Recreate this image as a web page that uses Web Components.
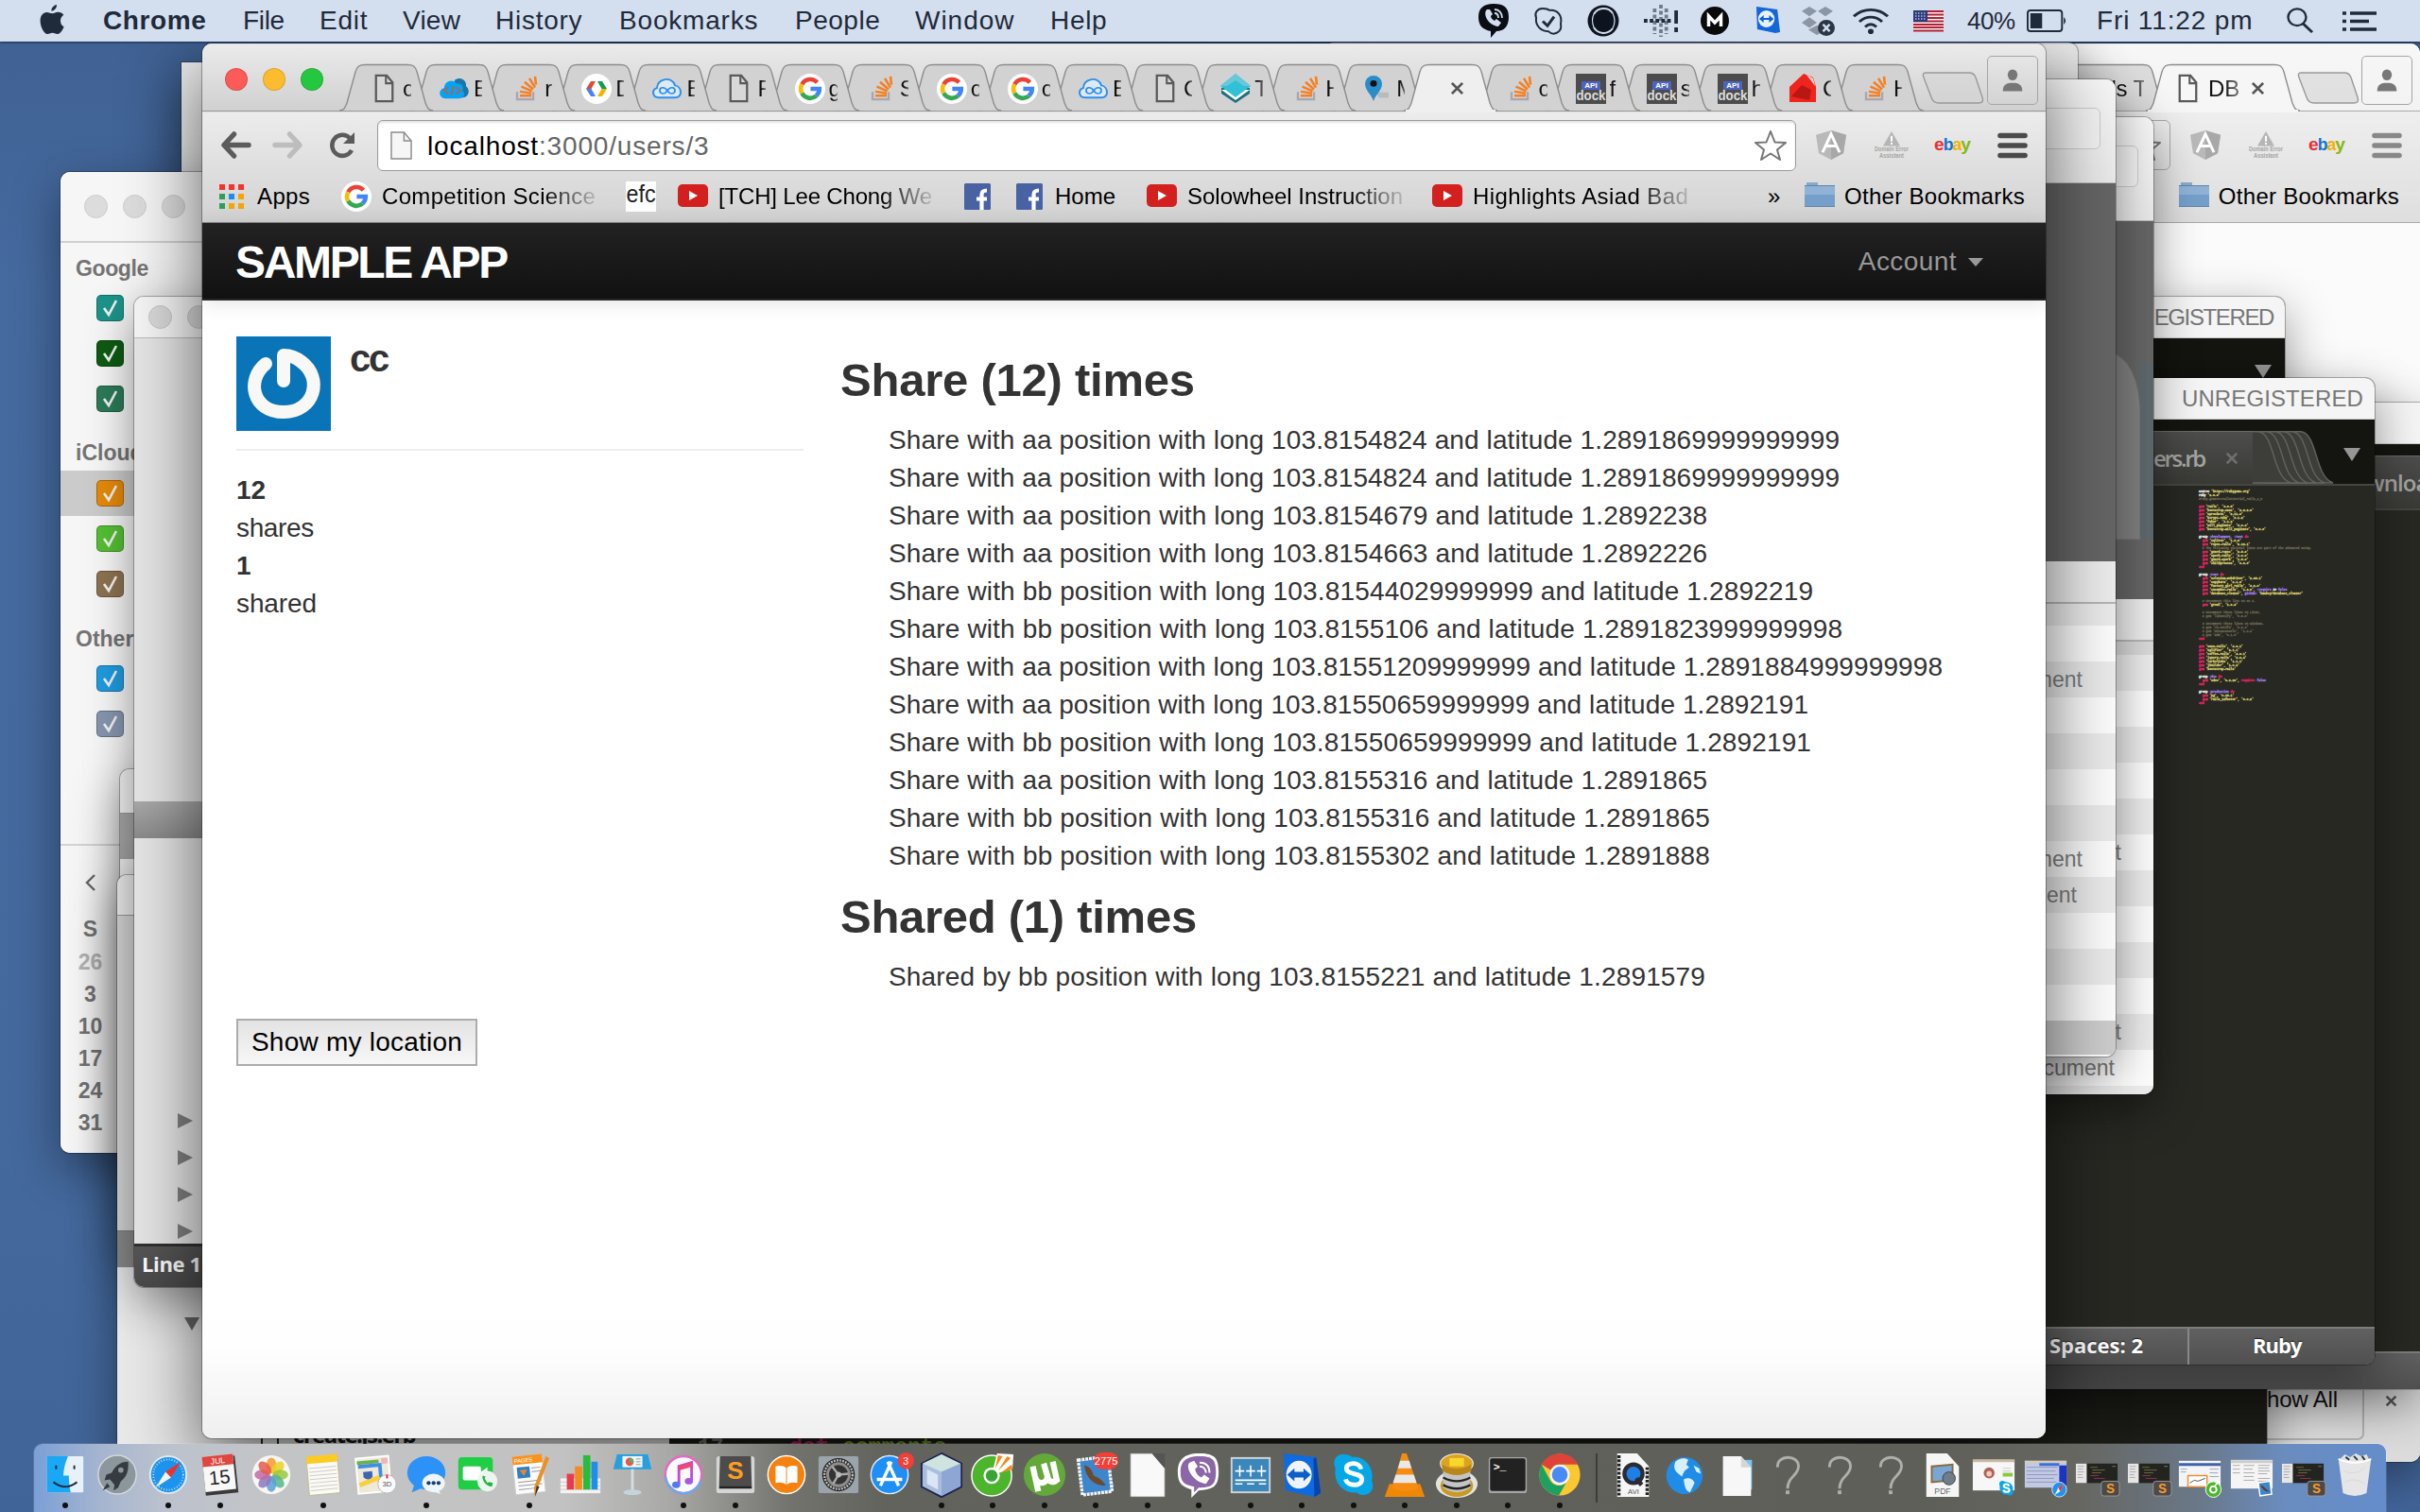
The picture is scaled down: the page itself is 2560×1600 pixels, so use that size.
<!DOCTYPE html>
<html lang="en">
<head>
<meta charset="utf-8">
<title>Sample App</title>
<style>
html,body{margin:0;width:2560px;height:1600px;overflow:hidden;background:#44679b;font-family:"Liberation Sans",Arial,sans-serif}
</style>
</head>
<body>
<desk-top></desk-top>
<script>
const PAGE='<path d="M2 1h13l7 8v22H2z" fill="#fff" fill-opacity=".15" stroke="#5a5a5a" stroke-width="2.6"/><path d="M14 1v9h8" fill="none" stroke="#5a5a5a" stroke-width="2.4"/>';
const GOOG='<circle cx="16" cy="16" r="16" fill="#fff"/><g fill="none" stroke-width="4.6"><path d="M23.5 9.2A10 10 0 0 0 7.3 11.3" stroke="#ea4335"/><path d="M7.3 11.3A10 10 0 0 0 7.3 20.7" stroke="#fbbc05"/><path d="M7.3 20.7A10 10 0 0 0 22.4 23.5" stroke="#34a853"/><path d="M22.4 23.5A10 10 0 0 0 25.8 16H16.4" stroke="#4285f4"/></g>';
const S_BADGE='<rect x="0" y="0" width="20" height="16" rx="3" fill="#4a4a4a" stroke="#999"/><text x="10" y="13" text-anchor="middle" font-size="14" font-weight="bold" fill="#ff9a1f">S</text>';
const thumbDark='<rect x="2" y="12" width="46" height="21" fill="#23241f"/><rect x="2" y="12" width="12" height="21" fill="#e6e6e6"/><path d="M4 15h7M4 18h6M4 21h7M4 24h5M4 27h6" stroke="#aaa"/><path d="M18 16h8M20 19h14M20 22h10" stroke="#6c6c45"/><path d="M18 25h9M22 28h12" stroke="#8a3355"/><path d="M42 15h4" stroke="#777"/>';
const ICONS={
apple:['0 0 26 32','<path d="M18 0c.3 3-2.300 6.600-5.600 6.600C12 3.600 15 .6 18 0zM22 17c0-3 1.500-5 3.400-6.200C24 8.800 21.600 7.800 19.500 7.800c-2.700 0-4 1.400-6 1.400S9.800 7.900 7.500 7.900C3.600 7.900.6 11.500.6 17c0 6.500 4.200 14 7.500 14 2 0 3-1.300 5.500-1.300 2.400 0 3.200 1.300 5.300 1.300 3 0 5.600-4.500 6.700-7.700C23.400 22.300 22 20 22 17z" fill="#1f2a3a"/>'],
mviber:['0 0 34 36','<path d="M17 0c11 0 16 4 16 14s-5 15-13 15l-6 7v-7C5 27 1 23 1 14S6 0 17 0z" fill="#0a0d14"/><path d="M10 6c-5 4 1 17 12 18l3-4-5-4-2 2c-2-1-4-3-4-5l2-2-3-5z" fill="#d3dfef"/><path d="M18 6c5 0 8 4 8 9M18 10c3 0 4 2 4 5" fill="none" stroke="#d3dfef" stroke-width="1.800"/>'],
mskype:['0 0 32 32','<path d="M10 2C4 2 1 7 3 12c-1 9 5 15 13 15 6 6 15 0 13-8C31 9 25 3 17 4c-2-2-5-2-7-2z" fill="none" stroke="#1f2a3a" stroke-width="2"/><path d="M10 16l5 5 7-10" fill="none" stroke="#1f2a3a" stroke-width="3"/>'],
mcirc:['0 0 34 34','<circle cx="17" cy="17" r="16.500" fill="#0d1420"/><path d="M27 9A12 12 0 0 0 7 10M7 24A12 12 0 0 0 27 25" fill="none" stroke="#d3dfef" stroke-width="2"/><path d="M7 10q-3 6 0 14M27 9q4 8 0 16" fill="none" stroke="#d3dfef" stroke-width="1.200"/>'],
mdots:['0 0 38 34','<g stroke="#1f2a3a" stroke-width="4" stroke-dasharray="4 2.500"><path d="M12 4v27M19 0v34M25 4v27" opacity=".55"/><path d="M0 17h30"/></g><path d="M36 6v14M36 24v5" stroke="#1f2a3a" stroke-width="4"/>'],
mm:['0 0 30 30','<circle cx="15" cy="15" r="15" fill="#0a0a0a"/><path d="M8.500 21V10l6.500 7 6.500-7v11" fill="none" stroke="#fff" stroke-width="3.500"/>'],
mtv:['0 0 28 30','<path d="M1 1l23 3 3 24-5 1L2 25z" fill="#1566d8"/><circle cx="12" cy="14" r="9" fill="#e8f0fa"/><path d="M4 14l5-4v3h6v-3l5 4-5 4v-3H9v3z" fill="#0c5fd6"/>'],
mdrop:['0 0 36 34','<g fill="#8b95a3"><path d="M9 1l8 5-8 6-8-6zM26 1l8 5-8 6-8-6zM9 13l8 6-8 6-8-6zM8 27l9-5 9 6-9 5z"/></g><circle cx="27" cy="25" r="9" fill="#2b3544"/><path d="M23.500 21l7 8M30.500 21l-7 8" stroke="#d3dfef" stroke-width="2.500"/>'],
mwifi:['0 0 40 30','<g fill="none" stroke="#1f2a3a" stroke-width="3"><path d="M2 10c10-10 26-10 36 0M8 16c7-7 17-7 24 0M14 22c4-4 8-4 12 0"/></g><circle cx="20" cy="27" r="3" fill="#1f2a3a"/>'],
mflag:['0 0 32 22','<rect width="32" height="22" fill="#f4f4f4"/><path d="M0 1h32M0 4.500h32M0 8h32M0 11.500h32M0 15h32M0 18h32M0 21.500h32" stroke="#b22234" stroke-width="1.800"/><rect width="15" height="12" fill="#2b3a78"/><path d="M2 3h11M2 6h11M2 9h11" stroke="#fff" stroke-dasharray="1.500 1.500"/>'],
mbatt:['0 0 46 24','<rect x="1" y="1" width="38" height="22" rx="3" fill="none" stroke="#1f2a3a" stroke-width="2"/><rect x="4" y="4" width="13" height="16" fill="#1f2a3a"/><path d="M41 8q4 4 0 8z" fill="#1f2a3a"/>'],
msearch:['0 0 30 30','<circle cx="12" cy="11" r="9.500" fill="none" stroke="#1f2a3a" stroke-width="2.400"/><path d="M18 18l10 10" stroke="#1f2a3a" stroke-width="3"/>'],
mlist:['0 0 36 22','<path d="M0 2h4M0 11h4M0 20h4M8 2h28M8 11h20M8 20h28" stroke="#1f2a3a" stroke-width="3.600"/>'],
page:['0 0 24 32',PAGE],
goog:['0 0 32 32',GOOG],
cloudcode:['0 0 32 26','<path d="M16 3c6-5 13 0 12 7 5 4 3 13-4 13H12z" fill="#1a76a8"/><path d="M6 24c-7 0-8-10-1-12C5 4 14 1 18 7c6-1 8 5 6 8 4 3 2 9-3 9z" fill="#03a3f7"/><path d="M9 11l-4 4 4 4M18 11l4 4-4 4M15 10l-3 10" stroke="#d9541e" stroke-width="1.600" fill="none"/>'],
so:['0 0 24 28','<path d="M3 18v8h17v-8" fill="none" stroke="#a6a8ad" stroke-width="2.400"/><g stroke="#f48024" stroke-width="2.600"><path d="M6 22h12M6 17.500l12 2M7.500 12l11 5M11 7l9 8M16 3l6 10M22 1l1 9"/></g>'],
gdev:['0 0 32 32','<circle cx="16" cy="16" r="16" fill="#fff"/><path d="M10 8h5l-4.500 8H5z" fill="#dd4b39"/><path d="M5 16h5.500l4.500 8h-5z" fill="#4285f4"/><path d="M17 8h5l5 8h-5.500z" fill="#0f9d58"/><path d="M21.500 16H27l-5 8h-5z" fill="#f4b400"/>'],
cloudinf:['0 0 32 26','<path d="M7 23c-7 0-8-9-2-11C5 1 21-2 24 9c7 1 9 14 0 14z" fill="#dceafb" stroke="#2f8fe8" stroke-width="2"/><path d="M16 15c-3-5-8-4-8 0s5 5 8 0 8-4 8 0-5 5-8 0" fill="none" stroke="#2f8fe8" stroke-width="1.800"/>'],
layers:['0 0 32 32','<path d="M16 31L1 21v-6h30v6z" fill="#1d6f80"/><path d="M16 28L1 17h30z" fill="#fff"/><path d="M16 25L0 13 16 0l16 13z" fill="#32c0d6"/><path d="M16 0l16 13h-7L16 7l-9 6H0z" fill="#67c8d8"/>'],
pin:['0 0 28 32','<path d="M12 20h14v6H16z" fill="#bbb"/><path d="M10 30C8 22 1 18 1 10a9 9 0 0 1 18 0c0 8-7 12-9 20z" fill="#2a8dcb"/><circle cx="10" cy="10" r="3.500" fill="#111"/>'],
apidock:['0 0 32 32','<rect width="32" height="32" fill="#4c4c4c"/><rect x="6" y="8" width="20" height="9" fill="#4c63c0"/><text x="16" y="15" font-size="8" text-anchor="middle" fill="#fff" font-weight="bold">API</text><text x=".5" y="28" font-size="15" fill="#ddd" font-weight="bold" textLength="31" lengthAdjust="spacingAndGlyphs">dock</text>'],
ruby:['0 0 32 32','<path d="M16 0l10 4 3 10v16H1V14z" fill="#ef241c"/><path d="M3 24l11-12 10 5-2 11z" fill="#b81712"/><path d="M19 1l7 4 2 8z" fill="#ffd9d5"/>'],
close:['0 0 16 16','<path d="M2 2l12 12M14 2L2 14" stroke="#555" stroke-width="3"/>'],
user:['0 0 28 32','<ellipse cx="14" cy="8" rx="6" ry="7.500" fill="#777"/><path d="M2 30c0-9 5-11 12-11s12 2 12 11z" fill="#777"/>'],
back:['0 0 32 28','<path d="M14 2L3 14l11 12M4 14h26" fill="none" stroke="#5b5b5b" stroke-width="5.500" stroke-linecap="round" stroke-linejoin="round"/>'],
fwd:['0 0 32 28','<path d="M18 2l11 12-11 12M28 14H2" fill="none" stroke="#bdbdbd" stroke-width="5.500" stroke-linecap="round" stroke-linejoin="round"/>'],
reload:['0 0 28 28','<path d="M22 6A11 11 0 1 0 24 19" fill="none" stroke="#5b5b5b" stroke-width="4.500"/><path d="M27 0v12H15z" fill="#5b5b5b"/>'],
blank:['0 0 24 30','<path d="M1 1h14l8 9v19H1z" fill="#f6f6f6" stroke="#8b8b8b" stroke-width="1.500"/><path d="M15 1v9h8" fill="none" stroke="#8b8b8b" stroke-width="1.500"/>'],
star:['0 0 36 34','<path d="M18 2l4.500 11.500L34 14l-9 7.500L28 32l-10-6.500L8 32l3-10.500L2 14l11.500-.5z" fill="#fff" stroke="#767676" stroke-width="2" stroke-linejoin="round"/>'],
ang:['0 0 33 32','<path d="M16 0l16 5-3 20-13 7L3 25 0 5z" fill="#b9b9b9"/><path d="M16 0l16 5-3 20-13 7z" fill="#a8a8a8"/><path d="M7 24l9-20 9 20M11 17h11" fill="none" stroke="#fff" stroke-width="3"/>'],
dom:['0 0 36 32','<path d="M18 1l9 16H9z" fill="#b5b5b5"/><path d="M18 6v6M18 13.500v2" stroke="#fff" stroke-width="2"/><text x="0" y="23" font-size="7" fill="#a5a5a5" textLength="36" lengthAdjust="spacingAndGlyphs" font-weight="bold">Domain Error</text><text x="5" y="30" font-size="7" fill="#a5a5a5" textLength="26" lengthAdjust="spacingAndGlyphs" font-weight="bold">Assistant</text>'],
ebay:['0 0 40 24','<g font-size="19" font-weight="bold"><text x="0" y="17" fill="#e53238" textLength="11" lengthAdjust="spacingAndGlyphs">e</text><text x="10" y="17" fill="#0f72d9" textLength="11" lengthAdjust="spacingAndGlyphs">b</text><text x="20" y="17" fill="#f5af02" textLength="10" lengthAdjust="spacingAndGlyphs">a</text><text x="29" y="17" fill="#86b817" textLength="11" lengthAdjust="spacingAndGlyphs">y</text></g>'],
burger:['0 0 32 28','<path d="M3 3.500h26M3 14h26M3 24.500h26" stroke="currentColor" stroke-width="5.600" stroke-linecap="round"/>'],
apps:['0 0 26 26','<path d="M0 3h6M10 3h6M20 3h6" stroke="#f4332b" stroke-width="6"/><path d="M0 13h6" stroke="#2f9e58" stroke-width="6"/><path d="M10 13h6" stroke="#1e8bf2" stroke-width="6"/><path d="M20 13h6" stroke="#f2a503" stroke-width="6"/><path d="M0 23h6" stroke="#2f9e58" stroke-width="6"/><path d="M10 23h6M20 23h6" stroke="#f2a503" stroke-width="6"/>'],
efc:['0 0 32 32','<rect width="32" height="32" fill="#fff"/><text x=".5" y="22" font-size="25" fill="#222" textLength="31" lengthAdjust="spacingAndGlyphs">efc</text>'],
yt:['0 0 32 24','<rect width="32" height="24" rx="5" fill="#d3201f"/><path d="M12 7l9 5-9 5z" fill="#fff"/>'],
fb:['0 0 28 28','<rect width="28" height="28" rx="1.500" fill="#4862a3"/><path d="M18.500 28V12c0-3 1-4.500 5.500-4.500M13 16.500h11" fill="none" stroke="#fff" stroke-width="4.200"/>'],
folder:['0 0 32 28','<path d="M2 1h12v5H2z" fill="#88aaca"/><rect x="0" y="4" width="32" height="23" rx="1" fill="#8fb2d6"/><rect x="0" y="14" width="32" height="13" rx="1" fill="#759fca"/><path d="M0 26.500h32M0 4.500h32" stroke="#5e86ae"/>'],
power:['0 0 100 100','<rect width="100" height="100" fill="#0a74b8"/><path d="M31 29C10 46 17 80 50 80s42-36 19-53C63 22 57 20 50 20v27" fill="none" stroke="#f8f8f6" stroke-width="14" stroke-linecap="round" stroke-linejoin="round"/>'],
finder:['0 0 50 50','<rect x="5" y="4" width="40" height="39" rx="1" fill="#e9f1f8"/><path d="M5 4h23c-3 7-5 14-5 21h6c0 8 1 13 2 18H5z" fill="#19a8f5"/><path d="M12 32q13 10 26 0M15 14v4M35 14v4" fill="none" stroke="#1a2b40" stroke-width="2"/>'],
rocket:['0 0 50 50','<circle cx="25" cy="24" r="21" fill="#8c979d" stroke="#d6dadc" stroke-width="1.500"/><path d="M37 10c-10 0-15 6-18 12l-6 2-2 6 6-1 5 6-1 6 5-3 3-7c6-4 9-11 8-21zM14 33l-5 8 8-4z" fill="#353b40"/><circle cx="29" cy="19" r="3" fill="#8c979d"/>'],
safari:['0 0 50 50','<circle cx="25" cy="24" r="21" fill="#e5e9ec"/><circle cx="25" cy="24" r="19" fill="#1c94ee"/><circle cx="25" cy="24" r="16.500" fill="none" stroke="#bfe0fb" stroke-width="2" stroke-dasharray="1 2"/><path d="M39 10L28 27l-6-6z" fill="#f03027"/><path d="M11 38l11-17 6 6z" fill="#f4f4f4"/>'],
cal:['0 0 50 50','<g transform="rotate(-6 25 25)"><rect x="7" y="5" width="36" height="40" fill="#3a3a3a"/><rect x="7" y="4" width="34" height="37" fill="#f8f8f8"/><rect x="7" y="3" width="34" height="11" fill="#e0453f"/><text x="24" y="12" font-size="9" fill="#fff" text-anchor="middle">JUL</text><text x="24" y="34" font-size="21" fill="#222" text-anchor="middle">15</text></g>'],
photos:['0 0 50 50','<circle cx="25" cy="24" r="21" fill="#f6f6f4"/>'+['#f79a2b','#e8d324','#9ac93c','#54b88a','#5a9fd8','#8f77c0','#c36aa5','#e85b4e'].map((c,i)=>`<ellipse cx="25" cy="14" rx="5.500" ry="8.500" fill="${c}" opacity=".85" transform="rotate(${i*45} 25 24)"/>`).join('')],
notes:['0 0 50 50','<g transform="rotate(-5 25 25)"><rect x="8" y="4" width="34" height="41" fill="#fbfaf3" stroke="#bdb58c" stroke-width=".8"/><rect x="8" y="3" width="34" height="8" fill="#fccb22"/><path d="M10 16h30M10 20h30M10 24h30M10 28h30M10 32h30M10 36h30M10 40h30" stroke="#ccc"/></g>'],
maps:['0 0 50 50','<g transform="rotate(-5 25 25)"><rect x="6" y="5" width="36" height="38" fill="#efe9d8" stroke="#fff" stroke-width="2"/><path d="M7 8h24v4H7z" fill="#69b34c"/><path d="M8 14h24v26" fill="none" stroke="#3f8fe6" stroke-width="4"/><path d="M8 34l20-6 12 12" fill="none" stroke="#f8cf3c" stroke-width="5"/><path d="M13 20h10v6q-5 5-10 0z" fill="#3c66b4"/><path d="M34 7h7v6h-7z" fill="#f3b1b8"/></g><circle cx="39" cy="34" r="10" fill="#fafafa" stroke="#bbb"/><text x="39" y="37" font-size="8" text-anchor="middle" fill="#555">3D</text><path d="M39 24v4" stroke="#e22" stroke-width="2"/>'],
msg:['0 0 50 50','<ellipse cx="25" cy="22" rx="21" ry="18" fill="#2c92f7"/><path d="M12 34l-3 9 12-5z" fill="#2c92f7"/><ellipse cx="33" cy="33" rx="12.500" ry="10" fill="#eef5fb"/><path d="M38 40l3 5-9-3z" fill="#eef5fb"/><g fill="#173e70"><circle cx="27.500" cy="33" r="2.200"/><circle cx="33" cy="33" r="2.200"/><circle cx="38.500" cy="33" r="2.200"/></g>'],
ft:['0 0 50 50','<rect x="4" y="5" width="38" height="35" rx="4" fill="#1fce45"/><rect x="9" y="15" width="20" height="15" rx="2" fill="#fff"/><path d="M29 21l7-5v13l-7-5z" fill="#fff"/><circle cx="36" cy="31" r="11" fill="#eef5ee"/><path d="M31 25c-2 3 3 12 10 12l1-4-4-1-2 1-3-5 1-2z" fill="#1fb843"/>'],
pages:['0 0 50 50','<g transform="rotate(-6 25 25)"><rect x="8" y="4" width="33" height="40" fill="#fbfbfb" stroke="#ccc"/><rect x="8" y="3" width="33" height="9" fill="#f7931e"/><text x="20" y="10" font-size="6" fill="#fff" text-anchor="middle">PAGES</text><rect x="12" y="15" width="14" height="12" fill="#2c80c8"/><path d="M15 18h8l-4 7z" fill="#f58220"/><path d="M28 17h10M28 21h10M12 31h26M12 35h26M12 39h18" stroke="#999"/></g><path d="M43 4l4 2-13 33-3 8-1-9z" fill="#e8912a"/><path d="M33 36l3 1-5 11z" fill="#333"/>'],
numbers:['0 0 50 50','<rect x="3" y="28" width="44" height="16" fill="#f3f3f3"/><path d="M3 32h44M3 36h44M3 40h44" stroke="#ccc"/><rect x="10" y="23" width="8" height="17" fill="#e93b50"/><rect x="19" y="15" width="8" height="25" fill="#f58a1f"/><rect x="28" y="3" width="8" height="37" fill="#2abb3d"/><rect x="37" y="10" width="7" height="30" fill="#1e8fe8"/>'],
keynote:['0 0 50 50','<path d="M8 2h34l4 16H4z" fill="#259fe0"/><rect x="14" y="4" width="22" height="12" fill="#f2f6f8"/><circle cx="22" cy="10" r="4.500" fill="#e4574d"/><path d="M22 10V5.500a4.500 4.500 0 0 1 4 6z" fill="#4ab867"/><path d="M29 7h5M29 10h5M29 13h5" stroke="#999"/><path d="M25 18v24" stroke="#d6dde2" stroke-width="3"/><ellipse cx="25" cy="43" rx="10" ry="3" fill="#c5d3dc"/>'],
itunes:['0 0 50 50','<circle cx="25" cy="24" r="20" fill="#fbfbfd" stroke="#e668c0" stroke-width="2.500"/><path d="M5.500 27A20 20 0 0 0 44 31" fill="none" stroke="#6aa8f5" stroke-width="2.500"/><path d="M20 34V15l14-4v19" fill="none" stroke="#c04ad2" stroke-width="3"/><path d="M20 17l14-4" stroke="#ee4a72" stroke-width="5"/><ellipse cx="17" cy="35" rx="4.500" ry="3.500" fill="#5a78ee"/><ellipse cx="31" cy="31" rx="4.500" ry="3.500" fill="#a65ae0"/>'],
subl:['0 0 50 50','<rect x="4" y="4" width="42" height="40" rx="3" fill="#d5d5d5"/><path d="M8 4h34l1 32H7z" fill="#4c4c4c"/><path d="M7 36h36v3H7z" fill="#222"/><text x="25" y="29" font-size="27" font-weight="bold" fill="#ff9d1e" text-anchor="middle">S</text>'],
ibooks:['0 0 50 50','<circle cx="25" cy="24" r="20.500" fill="#f5820e" stroke="#fff" stroke-width="1.500"/><path d="M25 17c-4-3-8-3-12-2v18c4-1 8-1 12 2 4-3 8-3 12-2V15c-4-1-8-1-12 2z" fill="#fff"/><path d="M25 17v18" stroke="#f5820e"/>'],
prefs:['0 0 50 50','<rect x="3" y="4" width="44" height="40" rx="2" fill="#9aa4aa"/><circle cx="25" cy="24" r="18" fill="#262626"/><circle cx="25" cy="24" r="15.500" fill="none" stroke="#bdbdbd" stroke-width="2.500" stroke-dasharray="2 1.200"/><circle cx="25" cy="24" r="12" fill="#333" stroke="#8e8e8e" stroke-width="3"/><path d="M25 24l11-1M25 24l-7-9M25 24l-6 10" stroke="#aaa" stroke-width="2.500"/><circle cx="25" cy="24" r="3" fill="#bbb"/>'],
appstore:['0 0 50 50','<circle cx="25" cy="24" r="20.500" fill="#1d8ff5" stroke="#e3eefb" stroke-width="1.500"/><path d="M27 10L15 36M23 10l12 26M11 29h28" stroke="#fff" stroke-width="3.500"/><circle cx="43" cy="9" r="9" fill="#f43e36"/><text x="43" y="13" font-size="11" text-anchor="middle" fill="#fff">3</text>'],
netb:['0 0 50 50','<path d="M25 1l22 11v25L25 48 3 37V12z" fill="#a9bedc" stroke="#1d2450" stroke-width="2"/><path d="M25 2l21 10-21 9L4 12z" fill="#cfe3df"/><path d="M25 21l21-9v24L25 47z" fill="#8ea6d3"/><path d="M9 18l12 6v16L9 34z" fill="#dbe6f5"/>'],
coccoc:['0 0 50 50','<circle cx="24" cy="25" r="22" fill="#4cb52b" stroke="#fff" stroke-width="1.500"/><path d="M24 24L30 1l18 1-1 16z" fill="#fff"/><path d="M28 17l3-14 5 1zM31 20l10-16 4 2zM34 22l12-9 1 5z" fill="#f18a21"/><circle cx="24" cy="25" r="9" fill="#fff"/><circle cx="24" cy="25" r="6.500" fill="#3aa336"/>'],
utor:['0 0 50 50','<circle cx="25" cy="24" r="23" fill="#63a93a"/><path d="M12 15l6 27M15 27c2 9 14 7 13-2l-4-13M28 25c1 8 8 8 11 4M34 10l5 22" fill="none" stroke="#fff" stroke-width="6.500"/>'],
mail:['0 0 50 50','<circle cx="36" cy="36" r="9" fill="#8a8f92"/><g transform="rotate(-7 25 25)"><rect x="8" y="6" width="33" height="38" fill="#3e86cc" stroke="#f5f5f5" stroke-width="3.500" stroke-dasharray="3 1"/><path d="M14 12c7 3 8 8 9 13 6 3 9 6 12 12-9-1-12-4-15-7-4-6-6-9-6-18z" fill="#6d4a2c"/></g><rect x="23" y="0" width="27" height="18" rx="9" fill="#f43e36"/><text x="36.500" y="13" font-size="11.500" text-anchor="middle" fill="#fff">2775</text>'],
doc:['0 0 50 50','<path d="M6 1h24l14 16v31H6z" fill="#f9f9f9" stroke="#777" stroke-width=".8"/><path d="M30 1h14v16z" fill="#555"/>'],
viber:['0 0 50 50','<path d="M25 1c17 0 22 4 22 20S41 40 25 41l-8 8v-9C6 37 2 33 2 21S8 1 25 1z" fill="#fff"/><path d="M25 4c15 0 19 3 19 17s-4 17-19 17l-5 5v-6C8 35 5 31 5 21S10 4 25 4z" fill="#8b66a9"/><path d="M15 11c-5 4 2 20 18 23l4-6-6-4-3 3c-4-2-6-5-7-9l3-3-4-6z" fill="#fff"/><path d="M26 11c7 0 11 4 11 11M26 15c4 0 7 3 7 7" fill="none" stroke="#fff" stroke-width="2"/>'],
plus:['0 0 50 50','<rect x="3" y="5" width="44" height="39" fill="#cfd4d7"/><rect x="5" y="7" width="40" height="35" fill="#3b87bb"/><path d="M8 20h10M20 20h10M32 20h10M13 14v12M25 14v12M37 14v12M8 30h34" stroke="#fff" stroke-width="1.600"/><path d="M8 34h34" stroke="#fff" stroke-width="1.600" stroke-dasharray="8 5"/>'],
tv:['0 0 50 50','<path d="M5 1l36 4 5 39-7 4L7 41z" fill="#0d6ae0"/><path d="M41 5l5 39-7 4L38 7z" fill="#0546a8"/><ellipse cx="22" cy="24" rx="14" ry="15" fill="#f0f4fa"/><path d="M9 24l8-7v4h10v-4l8 7-8 7v-4H17v4z" fill="#0d5fc8"/>'],
skype:['0 0 50 50','<path d="M14 2C5 1 1 10 5 17c-3 18 12 28 23 26 10 8 22-2 17-12C48 14 35 4 24 5c-3-2-6-3-10-3z" fill="#05a7e8"/><path d="M33 18c-1-8-16-8-16-1 0 8 17 4 17 12 0 8-16 8-18 0" fill="none" stroke="#fff" stroke-width="5"/>'],
vlc:['0 0 50 50','<path d="M8 34h34l5 14H3z" fill="#f08705"/><path d="M22 1h5l13 37c-7 5-22 5-29 0z" fill="#f68c12"/><path d="M20 9h10l2.500 8h-15zM15 24h20l3 9H12z" fill="#e9e9e9"/>'],
sequel:['0 0 50 50','<ellipse cx="25" cy="34" rx="23" ry="15" fill="#e2e2e2"/><ellipse cx="25" cy="36" rx="18" ry="12" fill="#c99a1f"/><path d="M10 14h30v24q-15 10-30 0z" fill="#c4c4c4"/><path d="M10 27q15 8 30 0M10 35q15 8 30 0" fill="none" stroke="#222" stroke-width="2.500"/><ellipse cx="25" cy="12" rx="18" ry="10.500" fill="#dca322" stroke="#eee" stroke-width="1.200"/><path d="M9 13q16 9 32 0v7q-16 9-32 0z" fill="#b98718"/><path d="M17 6h16v9H17z" fill="#f8d72c"/>'],
term:['0 0 50 50','<rect x="4" y="5" width="42" height="39" rx="3" fill="#a7a7a7"/><rect x="5.500" y="6.500" width="39" height="35" rx="2" fill="#222"/><text x="9" y="19" font-size="12" fill="#fff" font-family="Liberation Mono" font-weight="bold">&gt;_</text>'],
chrome:['0 0 50 50','<circle cx="25" cy="24" r="22.500" fill="#fbc82f"/><path d="M5 13A23 23 0 0 1 45 13H25a11 11 0 0 0-10 6z" fill="#dd4437"/><path d="M5 13A23 23 0 0 0 24 46.500L33 31a11 11 0 0 1-18 0z" fill="#1da161"/><circle cx="25" cy="24" r="11" fill="#f5f5f5"/><circle cx="25" cy="24" r="8.600" fill="#4a8af4"/>'],
avi:['0 0 50 50','<path d="M7 1h22l13 14v33H7z" fill="#f6f6f6"/><path d="M9 3v44M40 16v31" stroke="#222" stroke-width="3.500" stroke-dasharray="3 1.500"/><circle cx="25" cy="23" r="10" fill="#1f7fe8" stroke="#2b2b33" stroke-width="4.500"/><path d="M28 28l6 7" stroke="#2b2b33" stroke-width="5"/><text x="25" y="45" font-size="8" text-anchor="middle" fill="#555">AVI</text>'],
globe:['0 0 50 50','<circle cx="25" cy="25" r="20" fill="#1f8de8"/><path d="M15 10c6-5 12-4 14-2l-2 5 3 3-5 4-3 6-5-4c-4-4-4-8-2-12zM24 29c6-3 11 0 12 4l-5 10c-6-2-6-9-7-14zM35 14l6 3 2 6-5-2z" fill="#d8f0fb"/>'],
docs:['0 0 50 50','<rect x="28" y="8" width="14" height="32" fill="#79c7f0"/><path d="M10 4h20l11 12v31H10z" fill="#f7f7f7"/><path d="M30 4v12h11z" fill="#d5d5d5"/>'],
q:['0 0 50 50','<path d="M14 16C13 2 37 2 37 15c0 10-12 11-12 24" fill="none" stroke="#aeaeab" stroke-width="3"/><rect x="23" y="41" width="4" height="4" fill="#aeaeab"/>'],
pdf:['0 0 50 50','<path d="M7 1h23l13 14v33H7z" fill="#f6f6f6"/><path d="M13 15l23-2v17l-23 2z" fill="#7aa6d6" stroke="#8a6a3a" stroke-width="2"/><circle cx="32" cy="28" r="7" fill="#6f7c8a" stroke="#444"/><text x="25" y="45" font-size="9" text-anchor="middle" fill="#666">PDF</text>'],
th1:['0 0 50 50','<rect x="2" y="8" width="46" height="33" fill="#f7f7f7"/><path d="M2 9h46" stroke="#c9b9a0" stroke-width="3"/><circle cx="20" cy="22" r="6" fill="#b0625a"/><circle cx="20" cy="23" r="3" fill="#f1c9b4"/><path d="M35 17h9M35 20h9" stroke="#ccc"/><path d="M35 24h11" stroke="#8cc840" stroke-width="4"/><g transform="translate(30 30) scale(.36)"><path d="M14 2C5 1 1 10 5 17c-3 18 12 28 23 26 10 8 22-2 17-12C48 14 35 4 24 5z" fill="#05a7e8"/><path d="M33 18c-1-8-16-8-16-1 0 8 17 4 17 12 0 8-16 8-18 0" fill="none" stroke="#fff" stroke-width="6"/></g>'],
th2:['0 0 50 50','<rect x="2" y="9" width="46" height="29" fill="#c2c9e4"/><path d="M2 10h46" stroke="#d9cbb0" stroke-width="2"/><path d="M18 13h22" stroke="#3d6fd8" stroke-width="3"/><path d="M4 16h34M4 20h32M4 24h34M4 28h30M4 32h33" stroke="#9099bd"/><rect x="40" y="14" width="8" height="22" fill="#1b34c4"/><circle cx="40" cy="40" r="8" fill="#1c94ee" stroke="#dde"/><path d="M45 34l-4 8-6 4 4-8z" fill="#f4f4f4"/><path d="M45 34l-4 8-2-4z" fill="#f03027"/>'],
th3:['0 0 50 50',thumbDark+'<g transform="translate(30 31)">'+S_BADGE+'</g>'],
th4:['0 0 50 50','<rect x="2" y="9" width="46" height="28" fill="#f3f4f6"/><path d="M2 13h46" stroke="#3f62a8" stroke-width="3"/><path d="M4 18h7M4 21h6M36 18h10M36 22h9M36 26h10" stroke="#9ab"/><rect x="12" y="25" width="21" height="12" fill="#fff" stroke="#f08a30" stroke-width="1.500"/><path d="M14 33l5-3 4 1 8-3" fill="none" stroke="#555"/><circle cx="40" cy="40" r="8.500" fill="#4cb52b" stroke="#fff"/><circle cx="40" cy="40" r="3.500" fill="none" stroke="#fff" stroke-width="2"/><path d="M41 37l3-7 4 2z" fill="#fff"/>'],
th5:['0 0 50 50','<rect x="2" y="8" width="46" height="31" fill="#f5f5f5"/><path d="M2 10h46" stroke="#ccc" stroke-width="3"/><path d="M4 14h8M4 18h8M4 22h8M16 14h12M16 18h10M16 22h12M16 26h11M16 30h12M32 14h13M32 17h12M32 20h13M32 23h10M32 28h13M32 31h12" stroke="#aaa"/><g transform="rotate(-8 39 38)"><rect x="33" y="32" width="13" height="14" fill="#3e86cc" stroke="#fff" stroke-width="1.500"/><path d="M35 35c4 1 5 5 9 8-5 0-7-3-9-8z" fill="#5a4028"/></g>'],
trash:['0 0 50 50','<path d="M9 7l5-5 6 3 6-4 6 3 6-2 3 6-16 5z" fill="#dfe3e6"/><path d="M15 5l4 3M24 4l4 4M33 4l3 4" stroke="#333" stroke-width="2"/><path d="M7 7q18 8 36 0l-5 37q-13 6-26 0z" fill="#e6e6e6"/><path d="M7 7q18 8 36 0" fill="none" stroke="#fff" stroke-width="2"/><path d="M13 20q12 6 24-4M14 32q10-6 22 2" stroke="#d8d8d8" fill="none"/>']
};
const define=(n,css,html,extra)=>customElements.define(n,class extends HTMLElement{
  constructor(){super();this.attachShadow({mode:'open'})}
  connectedCallback(){this.shadowRoot.innerHTML='<style>'+css+'</style>'+(typeof html==='function'?html(this):html);if(extra)extra(this)}
});
const ic=(n,w,h,st='')=>`<ui-icon name="${n}" style="width:${w}px;height:${h}px;${st}"></ui-icon>`;
const ft=(t,w,st='')=>`<fit-text w="${w}" style="${st}">${t}</fit-text>`;

define('ui-icon',':host{display:block;flex:none}svg{display:block;width:100%;height:100%;overflow:visible;font-family:"Liberation Sans",sans-serif}',
  e=>{const i=ICONS[e.getAttribute('name')];return `<svg viewBox="${i[0]}" preserveAspectRatio="none">${i[1]}</svg>`});

/* menu bar */
const cell=(a,b,inner)=>`<div class="c" style="width:${b-a}px">${inner}</div>`;
define('menu-bar',`:host{position:absolute;left:0;top:0;width:2560px;height:44px;box-sizing:border-box;background:#d3dfef;box-shadow:0 1px 2px #16294a;display:flex;align-items:center;padding-left:42px;font-size:28px;color:#1f2a3a;z-index:50}
.c{flex:none;height:44px;display:flex;align-items:center}.c>*{flex:none}`,
 cell(42,109,ic('apple',26,32,'margin-top:-3px'))+
 [['Chrome',109,257,109,1],['File',257,338,44],['Edit',338,426,51],['View',426,524,61],['History',524,655,92],['Bookmarks',655,841,147],['People',841,968,90],['Window',968,1111,105],['Help',1111,1563,60]].map(m=>cell(m[1],m[2],ft(m[0],m[3],m[4]?'font-weight:bold':''))).join('')+
 cell(1563,1622,ic('mviber',34,36))+cell(1622,1679,ic('mskype',32,31))+cell(1679,1739,ic('mcirc',34,34))+cell(1739,1799,ic('mdots',36,34))+cell(1799,1857,ic('mm',30,30))+cell(1857,1905,ic('mtv',27,30,'margin-top:-3px'))+cell(1905,1959,ic('mdrop',36,32))+cell(1959,2024,ic('mwifi',40,28))+cell(2024,2081,ic('mflag',32,22))+cell(2081,2144,ft('40%',51,'font-size:26px'))+cell(2144,2218,ic('mbatt',44,24))+cell(2218,2418,ft('Fri 11:22 pm',165))+cell(2418,2478,ic('msearch',30,28))+ic('mlist',36,21));

/* generic window frame on the desktop */
define('mac-window',`:host{position:absolute;isolation:isolate;display:flex;flex-direction:column;overflow:hidden;border-radius:10px;box-shadow:0 0 0 1px rgba(0,0,0,.28),0 16px 50px rgba(0,0,0,.42);background:#f4f4f4}
:host([focused]){box-shadow:0 0 0 1px rgba(0,0,0,.3),0 30px 80px rgba(0,0,0,.62)}`,'<slot></slot>');

/* tabs */
define('browser-tab',`:host{position:relative;display:flex;flex:none;box-sizing:border-box;width:75.1px;height:49px;align-items:center;font-size:24px;color:#111;padding-left:19px;padding-top:2px}
svg.s{position:absolute;left:0;top:0;width:100%;height:49px;overflow:visible}
.i{width:32px;display:flex;justify-content:center;position:relative}.t{position:relative;width:9px;margin-left:4px;overflow:hidden;white-space:nowrap;-webkit-mask-image:linear-gradient(90deg,#000 50%,rgba(0,0,0,.5))}
:host([wide]) .t{width:34px;margin-left:6px}`,
 e=>{const w=+e.getAttribute('w')||75.1,a=e.hasAttribute('active'),i=e.getAttribute('icon'),t=e.getAttribute('label')||'';
 const d=`M-12 49C-7 49-6 46-4 41L5 8C7 2 9 .5 15 .5H${w-15}C${w-9} .5 ${w-7} 2 ${w-5} 8L${w+4} 41C${w+6} 46 ${w+7} 49 ${w+12} 49`;
 const dims={page:[21,29],so:[24,27],cloudcode:[32,24],cloudinf:[32,24],pin:[28,30]}[i]||[32,32];
 const c=e.getAttribute('fill')||(a?'#efefef':'#d2d2d3');
 return `<svg class="s"><path d="${d}" fill="${c}" stroke="#8d8d8d" stroke-width="1.400"/>${a?`<path d="M-10 49.500H${w+10}" stroke="${c}" stroke-width="3"/>`:''}</svg>`+(i?`<div class="i">${ic(i,dims[0],dims[1])}</div>`:'')+(t?`<div class="t">${t}</div>`:'')+(e.hasAttribute('closable')?ic('close',15,15,'position:relative;margin-left:'+(e.getAttribute('gap')||24)+'px'):'')},
 e=>{if(e.getAttribute('w'))e.style.width=e.getAttribute('w')+'px'});
define('new-tab',':host{display:block;width:66px;height:34px;flex:none}svg{overflow:visible}','<svg width="66" height="34"><path d="M4 1H50q5 0 7 5l7 21q2 6-4 6H18q-6 0-8-6L2 6Q0 1 4 1z" fill="#d3d3d3" fill-opacity=".6" stroke="#999" stroke-width="1.400"/></svg>');
define('user-chip',':host{display:flex;flex:none;width:52px;height:50px;border:1.500px solid #a5a5a5;border-radius:5px;align-items:center;justify-content:center}',ic('user',24,25));

/* extension icons + menu, shared by every browser toolbar */
define('ext-strip',':host{display:flex;align-items:center;flex:none;color:#4a4a4a}',
 ic('ang',33,31,'margin-left:21px')+ic('dom',36,31,'margin-left:29px')+ic('ebay',39,24,'margin-left:27px')+ic('burger',32,28,'margin-left:28px;margin-right:19px'));
define('other-marks',':host{display:flex;align-items:center;flex:none;gap:10px;padding-right:22px;font-size:24px;color:#000}',ic('folder',32,28,'margin-top:-4px')+ft('Other Bookmarks',191));

const front=[['page','c'],['cloudcode','E'],['so','r'],['gdev','D'],['cloudinf','E'],['page','F'],['goog','g'],['so','S'],['goog','c'],['goog','c'],['cloudinf','E'],['page','C'],['layers','T'],['so','H'],['pin','M'],null,['so','c'],['apidock','f'],['apidock','s'],['apidock','h'],['ruby','C'],['so','H']];
const mark=(a,b,inner)=>`<div class="m" style="width:${b-a}px">${inner}</div>`;
const fade='-webkit-mask-image:linear-gradient(90deg,#000 76%,rgba(0,0,0,.15) 100%)';
define('browser-chrome',`:host{display:flex;flex-direction:column;flex:none;height:190px;background:linear-gradient(#ebebeb,#d0d0d0 72px,#ececec 73px,#d2d2d2 190px);border-bottom:1.500px solid #858585;box-sizing:border-box}
.tabs{height:72px;flex:none;display:flex;align-items:flex-end;box-sizing:border-box;border-bottom:1.500px solid #999;position:relative}
.l{display:flex;gap:16px;margin:0 29px 21px 24px;width:104px;flex:none}.l i{width:22px;height:22px;border-radius:50%;border:1px solid rgba(0,0,0,.13)}
.bar{height:71px;display:flex;align-items:center;flex:none}
.omni{margin-left:23px;box-sizing:border-box;width:1502px;height:54px;border:1.500px solid #9b9b9b;border-radius:6px;background:#fff;display:flex;align-items:center;padding:0 8px 0 13px;font-size:28px;color:#666;box-shadow:inset 0 2px 2px #e4e4e4}
.omni b{font-weight:normal;color:#000}.omni fit-text{margin:2px 0 0 16px}
.marks{display:flex;align-items:center;height:38px;font-size:24px;color:#000;padding-left:18px}
.m{display:flex;align-items:center;flex:none}.m>*{flex:none}`,
 `<div class="tabs"><div class="l"><i style="background:#fc5b57"></i><i style="background:#fdbb2e"></i><i style="background:#26c740"></i></div>`+
 front.map((t,i)=>t?`<browser-tab icon="${t[0]}" label="${t[1]}" style="z-index:${30-i}"></browser-tab>`:`<browser-tab active closable gap="18" style="z-index:40"></browser-tab>`).join('')+
 `<new-tab style="margin:0 0 7px 10px"></new-tab><user-chip style="margin:0 0 6px 3px"></user-chip></div>
 <div class="bar">${ic('back',31,27,'margin-left:20px')}${ic('fwd',31,27,'margin-left:24px')}${ic('reload',28,28,'margin-left:28px')}<div class="omni">${ic('blank',23,30)}<fit-text w="298"><b>localhost</b>:3000/users/3</fit-text>${ic('star',36,34,'margin-left:auto')}</div><ext-strip></ext-strip></div>
 <div class="marks">`+
 mark(232,272,ic('apps',26,26))+mark(272,361,ft('Apps',56))+mark(361,404,ic('goog',32,32))+mark(404,662,ft('Competition Science',226,fade))+mark(662,717,ic('efc',32,32))+mark(717,760,ic('yt',32,24,'margin-top:-3px'))+mark(760,1020,ft('[TCH] Lee Chong We',226,fade))+mark(1020,1075,ic('fb',28,28))+mark(1075,1116,ic('fb',28,28))+mark(1116,1213,ft('Home',64))+mark(1213,1256,ic('yt',32,24,'margin-top:-3px'))+mark(1256,1515,ft('Solowheel Instruction',228,fade))+mark(1515,1558,ic('yt',32,24,'margin-top:-3px'))+mark(1558,1870,ft('Highlights Asiad Bad',228,fade))+mark(1870,1909,'<span>»</span>')+'<other-marks></other-marks></div>');

define('back-chrome',`:host{display:flex;flex-direction:column;flex:none;height:190px;background:linear-gradient(#f7f7f7,#f2f2f2 72px,#eee 73px,#dedede 190px);border-bottom:1.500px solid #a9a9a9;box-sizing:border-box}
.tabs{height:72px;flex:none;display:flex;align-items:flex-end;justify-content:flex-end;box-sizing:border-box;border-bottom:1.500px solid #aaa;padding-right:8px}
.bar,.marks{display:flex;align-items:center;justify-content:flex-end;height:71px;flex:none}.marks{height:38px}
.o{width:120px;height:51px;border:1.500px solid #aaa;border-radius:6px;display:flex;align-items:center;justify-content:flex-end;padding-right:8px}ext-strip{color:#888}`,
 `<div class="tabs"><browser-tab w="120" fill="#dcdcdc" wide style="padding-left:66px;z-index:1" label="'s T"></browser-tab><browser-tab w="139" active fill="#f6f6f6" wide closable gap="11" style="z-index:2;padding-left:16px" icon="page" label="DB"></browser-tab><new-tab style="margin:0 2px 7px 9px"></new-tab><user-chip style="margin-bottom:6px"></user-chip></div>
 <div class="bar"><div class="o">${ic('star',36,34)}</div><ext-strip></ext-strip></div><div class="marks"><other-marks></other-marks></div>`);

/* page */
const A='Share with aa position with long ',B='Share with bb position with long ',L=' and latitude ';
const shares=[[A+'103.8154824'+L+'1.2891869999999999',1006],[A+'103.8154824'+L+'1.2891869999999999',1006],[A+'103.8154679'+L+'1.2892238',866],[A+'103.8154663'+L+'1.2892226',866],[B+'103.81544029999999'+L+'1.2892219',978],[B+'103.8155106'+L+'1.2891823999999998',1009],[A+'103.81551209999999'+L+'1.2891884999999998',1115],[A+'103.81550659999999'+L+'1.2892191',973],[B+'103.81550659999999'+L+'1.2892191',976],[A+'103.8155316'+L+'1.2891865',866],[B+'103.8155316'+L+'1.2891865',869],[B+'103.8155302'+L+'1.2891888',869]];
define('app-nav',`:host{display:flex;flex:none;height:82px;box-sizing:border-box;background:linear-gradient(#222,#111);border-bottom:2px solid #252525;align-items:center;justify-content:space-between;padding:2px 66px 0 35px;box-shadow:0 2px 20px rgba(0,0,0,.12);z-index:1;color:#999;font-size:28px}
.b{color:#fff;font-weight:bold;font-size:48px}.a{display:flex;align-items:center;gap:12px}i{border:8px solid transparent;border-top:9px solid #999;border-bottom:0}`,
 `<span class="b">${ft('SAMPLE APP',288)}</span><span class="a">${ft('Account',104)}<i></i></span>`);
define('share-list',`:host{display:block;font-size:28px;line-height:40px;color:#333}h1{margin:0;font-size:49px;line-height:80px;height:84px}ul{margin:0;padding:0 0 0 51px;list-style:none}li{height:40px}`,
 e=>{const k=e.getAttribute('kind');const rows=k==='in'?[['Shared by bb position with long 103.8155221 and latitude 1.2891579',864]]:shares;
 return `<h1>${k==='in'?ft('Shared (1) times',377):ft('Share (12) times',375)}</h1><ul>${rows.map(r=>'<li>'+ft(r[0],r[1])+'</li>').join('')}</ul>`});
define('profile-card',`:host{display:block;width:600px;font-size:28px;line-height:40px;color:#333}.h{display:flex;gap:20px;height:100px}.h b{font-size:40px;line-height:46px}hr{margin:19px 0 22px;border:0;border-top:2px solid #eee;height:0}b{display:block}
button{display:flex;justify-content:center;align-items:center;margin-top:419px;width:255px;height:50px;border:2px solid #acacac;background:linear-gradient(#e3e3e3,#f7f7f7);font:28px "Liberation Sans",sans-serif;padding:0;color:#000}`,
 `<div class="h">${ic('power',100,100)}<b>${ft('cc',41)}</b></div><hr><b>${ft('12',31)}</b>${ft('shares',82)}<b>1</b>${ft('shared',85)}<button>${ft('Show my location',223)}</button>`);
define('user-page',`:host{display:flex;flex:1;background:linear-gradient(#fff 88%,#fefefe 92%,#efefef);padding:38px 36px 0;gap:39px}.r{flex:1;padding-top:6px}`,
 '<profile-card></profile-card><div class="r"><share-list></share-list><share-list kind="in" style="margin-top:4px"></share-list></div>');

/* calendar sidebar */
define('cal-side',`:host{display:flex;flex-direction:column;height:100%;color:#747474;font-size:23px;font-weight:bold;background:#f6f6f6}
.t{height:75px;flex:none;border-bottom:2px solid #d0d0d0;display:flex;gap:16px;align-items:center;padding-left:25px;box-sizing:border-box}.t i{width:23px;height:23px;border-radius:50%;background:#dcdcdc;border:1px solid #ccc}
.g{height:48px;line-height:52px;padding-left:16px}.k{height:48px;display:flex;align-items:center;padding-left:38px}.k.s{background:#cbcbcb}
.k i{width:27px;height:26px;border-radius:5px;border:1px solid rgba(0,0,0,.25);display:flex;align-items:center;justify-content:center}
.d{border-top:2px solid #d4d4d4;margin-top:103px;width:63px;text-align:center;display:flex;flex-direction:column}.d span{height:34px;line-height:34px}`,
 ()=>{const k=(c,s)=>`<div class="k${s?' s':''}"><i style="background:${c}"><svg width="20" height="20"><path d="M3 10l5 7 8-15" fill="none" stroke="#f2f2f2" stroke-width="2.600"/></svg></i></div>`;
 return `<div class="t"><i></i><i></i><i></i></div><div class="g" style="height:45px;line-height:54px">${ft('Google',77)}</div>${k('#1c9489')}${k('#0e5c12')}${k('#2c7a58')}<div class="g" style="height:52px;line-height:66px">iCloud</div>${k('#e58a0b',1)}${k('#55bf34')}${k('#8c7350')}<div class="g" style="line-height:68px;height:52px">Other</div>${k('#1f9ce0')}${k('#8696ad')}
 <div class="d"><span style="height:64px;display:flex;align-items:center;justify-content:center;padding-top:9px;box-sizing:content-box;height:55px;padding-top:9px"><svg width="12" height="18" style="margin-top:5px"><path d="M10 1L2 9l8 8" fill="none" stroke="#666" stroke-width="2.400"/></svg></span><span style="margin-top:7px">S</span><span style="height:35px;line-height:36px;color:#b4b4b4">26</span><span>3</span><span>10</span><span>17</span><span>24</span><span>31</span></div>`});

/* finder style list window, visible at its right edge */
define('list-pane',`:host{display:flex;flex-direction:column;height:100%;align-items:stretch;font-size:23px;color:#7c7c7c}
.h{height:110px;flex:none;background:linear-gradient(#f6f6f6,#e9e9e9);border-bottom:1px solid #bbb;box-sizing:border-box;display:flex;align-items:center;justify-content:flex-end;padding:0 16px 6px 0}.h i{width:90px;height:42px;border:1.500px solid #ccc;border-radius:6px;background:#f3f3f3}
.g{height:400px;flex:none;background:#656565;display:flex;justify-content:flex-end;align-items:flex-start}
.c{height:45px;flex:none;background:#ececec;border-bottom:2px solid #b5b5b5;box-sizing:border-box}
.r{flex:none;height:38px;line-height:38px;display:flex;justify-content:flex-end}.r span{flex:none}`,
 e=>{const rows=JSON.parse(e.getAttribute('rows'));return `<div class="h"><i></i></div><div class="g">${e.hasAttribute('tabbed')?'<svg width="60" height="340" style="margin-top:136px"><rect x="46" y="14" width="14" height="187" fill="#5e686c"/><path d="M0 0q42 0 46 60V201H0z" fill="#808080" stroke="#6a6a6a"/></svg>':''}</div><div class="c"></div>`+rows.map(r=>`<div class="r" style="height:${r[0]}px;background:${r[1]};padding-right:${r[3]||0}px">${r[2]?`<span>${r[2]}</span>`:''}</div>`).join('')});

/* text editor */
const code=`w|source |y|'https://rubygems.org'
w|ruby |y|'2.0.0'
c|#ruby-gemset=railstutorial_rails_4_0

G|rails|4.0.5
G|bootstrap-sass|2.3.2.0
G|sprockets|2.11.0
G|bcrypt-ruby|3.1.2
G|faker|1.1.2
G|will_paginate|3.0.4
G|bootstrap-will_paginate|0.0.9

w|group |p|:development, :test |r|do
g|sqlite3|1.3.8
g|rspec-rails|2.13.1
c|  # The following optional lines are part of the advanced setup.
g|guard-rspec|2.5.0
g|spork-rails|4.0.0
g|guard-spork|1.5.0
g|childprocess|0.3.6
r|end

w|group |p|:test |r|do
g|selenium-webdriver|2.35.1
g|capybara|2.1.0
g|factory_girl_rails|4.2.0
r|  gem |y|'cucumber-rails', '1.4.0', |p|:require |w|=> |p|false
r|  gem |y|'database_cleaner', |p|github: |y|'bmabey/database_cleaner'

c|  # Uncomment this line on OS X.
g|growl|1.0.3

c|  # Uncomment these lines on Linux.
c|  # gem 'libnotify', '0.8.0'

c|  # Uncomment these lines on Windows.
c|  # gem 'rb-notifu', '0.0.4'
c|  # gem 'win32console', '1.3.2'
c|  # gem 'wdm', '0.1.0'
r|end

G|sass-rails|4.0.1
G|uglifier|2.1.1
G|coffee-rails|4.0.1
G|jquery-rails|3.0.4
G|turbolinks|1.1.1
G|jbuilder|1.0.2
r|gem |y|'bootstrap-rails'

w|group |p|:doc |r|do
r|  gem |y|'sdoc', '0.3.20', |r|require: |p|false
r|end

w|group |p|:production |r|do
g|pg|0.15.1
g|rails_12factor|0.0.2
r|end`;
define('mini-map',`:host{display:block;width:186px;font:bold 3.120px/4px "Liberation Mono",monospace;white-space:pre;-webkit-text-stroke:.35px currentColor}.w{color:#e8e8e2}.y{color:#cfc66a}.c{color:#69654f;font-weight:normal}.r{color:#e02468}.p{color:#9c78e8}div{height:4px}`,
 ()=>{const esc=s=>s.replace(/>/g,'&gt;');return code.split('\n').map(l=>{let p=l.split('|');if(p[0]==='G'||p[0]==='g')p=['r',(p[0]==='g'?'  ':'')+'gem ','y',`'${p[1]}', '${p[2]}'`];let o='';for(let i=0;i+1<p.length;i+=2)o+=`<span class="${p[i]}">${esc(p[i+1])}</span>`;return `<div>${o}</div>`}).join('')});
define('code-editor',`:host{display:flex;flex-direction:column;height:100%;background:#272822;font-family:"Open Sans","Noto Sans",sans-serif}
.t{height:44px;flex:none;background:#f5f5f5;border-bottom:1px solid #ccc;box-sizing:border-box;display:flex;justify-content:flex-end;align-items:center;padding-right:12px;color:#777;font:24px "Liberation Sans",sans-serif}
.b{height:70px;flex:none;background:#141510;border-bottom:2px solid #45463f;box-sizing:border-box;display:flex;align-items:flex-end;justify-content:flex-end}
.tab{display:flex;align-items:center;height:56px;background:linear-gradient(#4d4d4b,#393a36);border-top:1.500px solid #6a6a66;color:#a5a5a3;font-size:24px;font-weight:600;box-sizing:border-box}
.v{width:0;border:9px solid transparent;border-top:14px solid #969696;border-bottom:0}
.m{flex:1;display:flex;justify-content:flex-end}
.s{height:40px;flex:none;background:linear-gradient(#606060,#505050);border-top:2px solid #7c7c7c;box-sizing:border-box;display:flex;justify-content:flex-end;color:#fff;font-size:22px;font-weight:bold;text-shadow:0 -1px 1px #222;line-height:35px}.s div{box-sizing:border-box}`,
 e=>{const k=e.getAttribute('kind');
 if(k==='old')return `<div class="t">${ft('EGISTERED',127)}</div><div class="b" style="align-items:flex-start"><div class="v" style="margin:28px 14px 0"></div></div>`;
 if(k==='side')return `<div class="t"></div><div class="b"><div class="tab" style="width:70px;overflow:hidden;padding-left:13px">${ft('wnloa',66)}</div></div><div class="m"></div><div class="s"></div>`;
 return `<div class="t">${ft('UNREGISTERED',192)}</div><div class="b"><div class="tab" style="width:240px;padding-left:113px;gap:22px">${ft('ers.rb',55)}${ic('close',14,14,'filter:invert(.3)')}</div><svg width="86" height="56" style="margin-left:-22px">${[0,1,2,3,4,5].map(i=>`<path d="M${-30+i*9} .7H${i*9+6}C${i*9+24} 3 ${i*9+20} 48 ${i*9+40} 55H${i*9-10}z" fill="#3d3e3a" stroke="#62625e" stroke-width="1.400"/>`).reverse().join('')}</svg><div class="v" style="margin:0 15px 24px 10px"></div></div><div class="m"><mini-map style="margin-top:4px"></mini-map></div>
 <div class="s"><div style="width:152px;padding-left:4px;border-right:2px solid #888">${ft('Spaces: 2',99)}</div><div style="width:196px;padding-left:67px">${ft('Ruby',52)}</div></div>`});

/* editor sidebars peeking out on the left */
define('tree-pane',`:host{display:flex;flex-direction:column;height:100%;background:#e6e6e6}
.t{height:44px;flex:none;background:#f6f6f6;border-bottom:1px solid #bbb;box-sizing:border-box;display:flex;gap:16px;align-items:center;padding-left:15px}.t i{width:23px;height:23px;border-radius:50%;background:#dadada;border:1px solid #c6c6c6}
.sel{margin-top:490px;height:39px;flex:none;background:linear-gradient(#a9a9a9,#8b8b8b)}.r{margin-top:291px;padding-left:46px;display:flex;flex-direction:column;gap:23px;height:138px;flex:none;overflow:hidden}.r i{width:0;border:8.500px solid transparent;border-left:16px solid #808080;border-right:0;flex:none}
.s{flex:1;background:linear-gradient(#565656,#4a4a4a);border-top:3px solid #303030;color:#fff;font:bold 22px/37px "Open Sans",sans-serif;padding-left:8px}`,
 `<div class="t"><i></i><i></i></div><div class="sel"></div><div class="r"><i></i><i></i><i></i><i></i></div><div class="s">${ft('Line 1',63)}</div>`);

/* dock */
const dock=[['finder',1],['rocket'],['safari',1],['cal',1],['photos'],['notes',1],['maps'],['msg',1],['ft'],['pages',1],['numbers'],['keynote'],['itunes',1],['subl',1],['ibooks'],['prefs'],['appstore'],['netb',1],['coccoc',1],['utor',1],['mail',1],['doc',1],['viber',1],['plus',1],['tv',1],['skype',1],['vlc',1],['sequel',1],['term',1],['chrome',1],['|'],['avi'],['globe'],['docs'],['q'],['q'],['q'],['pdf'],['th1'],['th2'],['th3'],['th3'],['th4'],['th5'],['th3'],['trash']];
define('dock-bar',`:host{position:absolute;z-index:60;left:36px;top:1528px;width:2488px;height:72px;box-sizing:border-box;padding-left:5.750px;border-radius:9px 9px 0 0;display:flex;align-items:stretch;background:linear-gradient(90deg,#7b9fd6 0,#a5b5d0 70px,#bcc2cd 140px,#c3c4c6 260px,#c2c2c2 560px,#a9a9a7 670px,#73736e 800px,#63635d 900px,#5f5f59 2000px,#666660 2160px,#6a7888 2290px,#6a8cbf 2380px,#648dcb 2488px);box-shadow:0 0 0 1px rgba(255,255,255,.12)}
.i{flex:none;width:54.500px;display:flex;flex-direction:column;align-items:center;padding-top:9px;box-sizing:border-box;gap:4px}.i b{width:6px;height:6px;border-radius:50%;background:#101010}
.p{flex:none;width:23.500px;display:flex;justify-content:center}.p i{width:2px;height:52px;margin-top:10px;background:#3c3c39}`,
 dock.map(d=>d[0]==='|'?'<div class="p"><i></i></div>':`<div class="i">${ic(d[0],48,49)}${d[1]?'<b></b>':''}</div>`).join(''));

const W=(x,y,w,h,inner,st='',attr='')=>`<mac-window ${attr} style="left:${x}px;top:${y}px;width:${w}px;height:${h}px;${st}">${inner}</mac-window>`;
const g='#ebebeb',w='#fcfcfc';
const rowsC=[[23,g],[38,w],[38,g,'ment',35],[38,w],[38,g],[38,w],[38,g],[38,w,'ment',35],[38,g,'ent',41],[38,w],[38,g],[38,w],[36,'#cdcdcd'],[2,'#fff']];
const rowsD=[[14,'#d9d9d9'],[38,g],[38,w],[38,g],[38,w],[38,g],[38,w,'t',34],[38,g],[38,w],[38,g],[38,w],[38,g,'t',34],[38,w,'cument',41],[12,g]];
define('desk-top',`:host{display:block;position:relative;width:2560px;height:1600px;overflow:hidden;background:linear-gradient(#3f6092,#456a9f 300px,#44699d 1200px,#416498)}
.show{height:76px;margin-top:auto;display:flex;justify-content:flex-end;background:#dcdcdc;font-size:24px;color:#111}.show div{width:103px;height:53px;border-right:2px solid #b0b0b0;border-bottom:2px solid #b0b0b0;border-radius:0 0 7px 0;box-sizing:border-box;line-height:20px}
.foot{display:flex;flex:1}.foot .a{width:584px;background:#e9e9e9;font:bold 24px "Open Sans",sans-serif;color:#161616}.foot .b{flex:1;background:#1c1d18;font:bold 23px "Liberation Mono",monospace}`,
 W(192,66,900,400,'','border-radius:0;background:#ededed')+
 W(500,46,2060,1501,`<back-chrome></back-chrome><div style="background:#fbfbfb;flex:1"></div><div class="show"><div>${ft('how All',75)}</div>${ic('close',13,13,'margin:5px 24px 0 22px')}</div>`)+
 W(1400,45,798,400,'','background:#e9e9e9')+
 W(64,182,700,1038,'<cal-side></cal-side>')+
 W(1700,314,717,700,'<code-editor kind="old"></code-editor>')+
 W(127,814,300,500,'<div style="height:46px;background:#f4f4f4;border-bottom:1px solid #999;flex:none"></div><div style="height:48px;background:#a8a8a8;flex:none"></div>')+
 W(124,926,2274,720,`<div style="height:43px;background:#ededed;border-bottom:1px solid #999;flex:none;box-sizing:border-box"></div><div style="height:333px;background:#d6d6d6;flex:none"></div><div style="height:39px;background:#8a8a8a;border-top:1px solid #777;box-sizing:border-box;flex:none"></div><div class="foot"><div class="a"><svg width="16" height="14" style="display:block;margin:53px 0 0 71px"><path d="M0 0h16l-8 14z" fill="#6c6c6c"/></svg><div style="display:flex;margin:93px 0 0 152px;gap:15px"><span style="width:19px;height:20px;border:2px solid #222;box-sizing:border-box;margin-top:17px"></span>${ft('create.js.erb',130)}</div></div><div class="b"><div style="display:flex;margin:173px 0 0 30px;white-space:pre;line-height:36px"><span style="color:#77776d;width:97px">17</span><span style="color:#b0215a;width:56px">def</span><span style="color:#6f9423">comments</span></div></div></div>`)+
 W(2000,426,560,1044,'<code-editor kind="side"></code-editor>','background:#272822;border-radius:0')+
 W(142,314,700,1048,'<tree-pane></tree-pane>')+
 W(1800,400,712,1044,'<code-editor></code-editor>')+
 W(1700,124,578,1034,`<list-pane tabbed rows='${JSON.stringify(rowsD)}'></list-pane>`)+
 W(1700,84,538,1034,`<list-pane rows='${JSON.stringify(rowsC)}'></list-pane>`)+
 W(214,46,1950,1476,'<browser-chrome></browser-chrome><app-nav></app-nav><user-page></user-page>','','focused')+
 '<menu-bar></menu-bar><dock-bar></dock-bar>');

/* spreads its text over a given width with letter-spacing */
define('fit-text',':host{display:block;width:max-content;white-space:nowrap}','<slot></slot>',
 e=>{e.style.letterSpacing='0';const n=e.textContent.length,nat=e.getBoundingClientRect().width,t=+e.getAttribute('w');if(nat&&n)e.style.letterSpacing=((t-nat)/(n-.5)).toFixed(3)+'px'});
</script>
</body>
</html>
